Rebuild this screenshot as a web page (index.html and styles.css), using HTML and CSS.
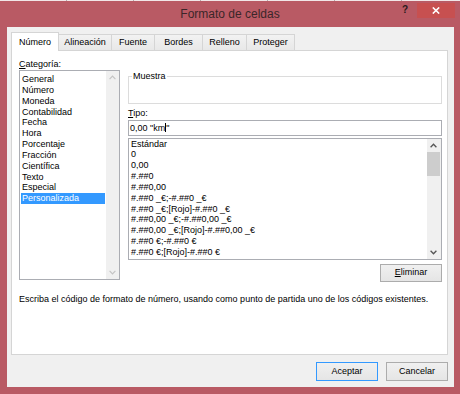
FILE: index.html
```html
<!DOCTYPE html>
<html lang="es">
<head>
<meta charset="utf-8">
<title>Formato de celdas</title>
<link rel="stylesheet" href="styles.css">
</head>
<body>
<div class="window">
  <div class="topstrip"></div>
  <div class="titlebar">
    <div></div>
    <div class="title">Formato de celdas</div>
    <div class="caption-btns">
      <span class="help">?</span>
      <span class="close"><svg width="8" height="7" viewBox="0 0 8 7"><path d="M0.8 0.4 L7.2 6.6 M7.2 0.4 L0.8 6.6" stroke="#ffffff" stroke-width="1.5" fill="none"/></svg></span>
    </div>
  </div>
  <div class="client">
    <div class="tabs">
      <div class="tab selected w-numero">Número</div>
      <div class="tab w-alineacion">Alineación</div>
      <div class="tab w-fuente">Fuente</div>
      <div class="tab w-bordes">Bordes</div>
      <div class="tab w-relleno">Relleno</div>
      <div class="tab w-proteger">Proteger</div>
    </div>
    <div class="panel">
      <div class="cols">
        <div class="leftcol">
          <div class="label"><u>C</u>ategoría:</div>
          <div class="listbox cat">
            <div class="items">
              <div class="item">General</div>
              <div class="item">Número</div>
              <div class="item">Moneda</div>
              <div class="item">Contabilidad</div>
              <div class="item">Fecha</div>
              <div class="item">Hora</div>
              <div class="item">Porcentaje</div>
              <div class="item">Fracción</div>
              <div class="item">Científica</div>
              <div class="item">Texto</div>
              <div class="item">Especial</div>
              <div class="item sel">Personalizada</div>
            </div>
            <div class="vscroll disabled">
              <div class="arrow"><svg width="7" height="5" viewBox="0 0 7 5"><path d="M0.6 4.2 L3.5 1.2 L6.4 4.2" stroke="#c4c4c4" stroke-width="1.2" fill="none"/></svg></div>
              <div class="track"></div>
              <div class="arrow"><svg width="7" height="5" viewBox="0 0 7 5"><path d="M0.6 0.8 L3.5 3.8 L6.4 0.8" stroke="#c4c4c4" stroke-width="1.2" fill="none"/></svg></div>
            </div>
          </div>
        </div>
        <div class="rightcol">
          <fieldset class="sample"><legend>Muestra</legend></fieldset>
          <div class="label tipo"><u>T</u>ipo:</div>
          <div class="textbox">0,00 "km<span class="caret"></span>"</div>
          <div class="listbox fmt">
            <div class="items">
              <div class="item">Estándar</div>
              <div class="item">0</div>
              <div class="item">0,00</div>
              <div class="item">#.##0</div>
              <div class="item">#.##0,00</div>
              <div class="item">#.##0 _€;-#.##0 _€</div>
              <div class="item">#.##0 _€;[Rojo]-#.##0 _€</div>
              <div class="item">#.##0,00 _€;-#.##0,00 _€</div>
              <div class="item">#.##0,00 _€;[Rojo]-#.##0,00 _€</div>
              <div class="item">#.##0 €;-#.##0 €</div>
              <div class="item">#.##0 €;[Rojo]-#.##0 €</div>
            </div>
            <div class="vscroll">
              <div class="arrow"><svg width="7" height="5" viewBox="0 0 7 5"><path d="M0.6 4.2 L3.5 1.2 L6.4 4.2" stroke="#555555" stroke-width="1.3" fill="none"/></svg></div>
              <div class="track"><div class="thumb"></div></div>
              <div class="arrow"><svg width="7" height="5" viewBox="0 0 7 5"><path d="M0.6 0.8 L3.5 3.8 L6.4 0.8" stroke="#555555" stroke-width="1.3" fill="none"/></svg></div>
            </div>
          </div>
          <button class="btn eliminar"><u>E</u>liminar</button>
        </div>
      </div>
      <p class="hint">Escriba el código de formato de número, usando como punto de partida uno de los códigos existentes.</p>
    </div>
    <div class="footer">
      <button class="btn default">Aceptar</button>
      <button class="btn">Cancelar</button>
    </div>
  </div>
</div>
</body>
</html>
```
FILE: styles.css
```css
* { box-sizing: border-box; }
html, body { margin: 0; padding: 0; }
body {
  width: 460px;
  height: 394px;
  overflow: hidden;
  background: #b95a64;
  font-family: "Liberation Sans", Arial, sans-serif;
  font-size: 9px;
  color: #000;
}
.window {
  width: 460px;
  height: 394px;
  background: #b95a64;
  display: flex;
  flex-direction: column;
}
.topstrip {
  height: 1px;
  background: repeating-linear-gradient(to right, #f1e6e7 0 66px, #b4a9aa 66px 67px);
}
.titlebar {
  height: 26px;
  display: grid;
  grid-template-columns: 1fr auto 1fr;
  align-items: start;
}
.title {
  font-size: 12px;
  line-height: 14px;
  padding-top: 6px;
  color: #3b2629;
  white-space: nowrap;
}
.caption-btns {
  justify-self: end;
  display: flex;
  align-items: flex-start;
}
.help {
  font-size: 10px;
  font-weight: bold;
  line-height: 12px;
  color: #2a1a1c;
  margin-top: 3px;
  margin-right: 9px;
}
.close {
  width: 38px;
  height: 15px;
  margin-top: 2px;
  margin-right: 5px;
  background: #c75050;
  display: flex;
  align-items: center;
  justify-content: center;
}
.close svg { display: block; }

.client {
  flex: 1;
  margin: 0 6px 7px 7px;
  background: #f0f0f0;
  padding: 5px 6px 6px 4px;
  display: flex;
  flex-direction: column;
}
.tabs {
  display: flex;
  align-items: flex-end;
  height: 18px;
  position: relative;
  z-index: 1;
}
.tab {
  height: 16px;
  padding-top: 2px;
  line-height: 11px;
  text-align: center;
  white-space: nowrap;
  border-top: 1px solid #d5d5d5;
  border-right: 1px solid #d5d5d5;
  background: linear-gradient(#f2f2f2, #e8e8e8);
}
.tab.selected {
  height: 19px;
  margin-bottom: -1px;
  padding-top: 4px;
  background: #fff;
  border-left: 1px solid #d5d5d5;
}
.w-numero { width: 48px; }
.w-alineacion { width: 53px; }
.w-fuente { width: 43px; }
.w-bordes { width: 48px; }
.w-relleno { width: 44px; }
.w-proteger { width: 48px; }

.panel {
  height: 305px;
  background: #fff;
  border: 1px solid #d5d5d5;
  padding: 8px 5px 0 7px;
}
.cols {
  display: grid;
  grid-template-columns: 101px 314px;
  column-gap: 8px;
  align-items: start;
}
.label { line-height: 11px; white-space: nowrap; }
.leftcol, .rightcol { display: flex; flex-direction: column; }

.listbox {
  display: flex;
  border: 1px solid #abadb3;
  background: #fff;
  overflow: hidden;
}
.listbox .items {
  flex: 1;
  min-width: 0;
  overflow: hidden;
}
.item {
  line-height: 10.85px;
  height: 10.85px;
  white-space: nowrap;
}
.cat { height: 210px; }
.cat .items { padding: 3px 1px 0 1px; }
.cat .item { padding-left: 1px; }
.item.sel { background: #3399ff; color: #fff; }

.fmt { height: 122px; margin-top: 1.5px; }
.fmt .items { padding: 0 0 0 2px; }

.vscroll {
  width: 13px;
  background: #f0f0f0;
  display: flex;
  flex-direction: column;
}
.fmt .vscroll { width: 14px; padding: 0 1px 0 0; }
.vscroll .arrow {
  height: 13px;
  display: flex;
  align-items: center;
  justify-content: center;
}
.vscroll .arrow svg { display: block; }
.vscroll .track { flex: 1; }
.thumb {
  height: 24px;
  margin-top: 0.5px;
  background: #cdcdcd;
}

.sample {
  margin: 12px 0 0;
  padding: 0 4px 0 3px;
  border: 1px solid #dcdcdc;
  height: 31px;
  box-sizing: content-box;
  min-width: 0;
}
.sample legend {
  padding: 0 1px;
  margin: 0;
  line-height: 11px;
}
.tipo { margin-top: 4px; }
.textbox {
  margin-top: 1px;
  height: 16px;
  border: 1px solid #abadb3;
  padding: 0 1px;
  line-height: 14px;
  white-space: nowrap;
  background: #fff;
}
.caret {
  display: inline-block;
  width: 1px;
  height: 9px;
  background: #000;
  vertical-align: -1px;
}

.btn {
  font-family: "Liberation Sans", Arial, sans-serif;
  font-size: 9px;
  color: #000;
  width: 62px;
  height: 19px;
  padding: 0;
  margin: 0;
  border: 1px solid #acacac;
  border-radius: 0;
  background: linear-gradient(#f0f0f0, #e5e5e5);
  line-height: 15px;
  text-align: center;
}
.eliminar {
  align-self: flex-end;
  height: 18px;
  margin-top: 4px;
}
.btn.default { border-color: #3399ff; }

.hint {
  margin: 12px 0 0;
  line-height: 11px;
  white-space: nowrap;
}
.footer {
  margin-top: 7px;
  display: flex;
  justify-content: flex-end;
  gap: 8px;
}
```
